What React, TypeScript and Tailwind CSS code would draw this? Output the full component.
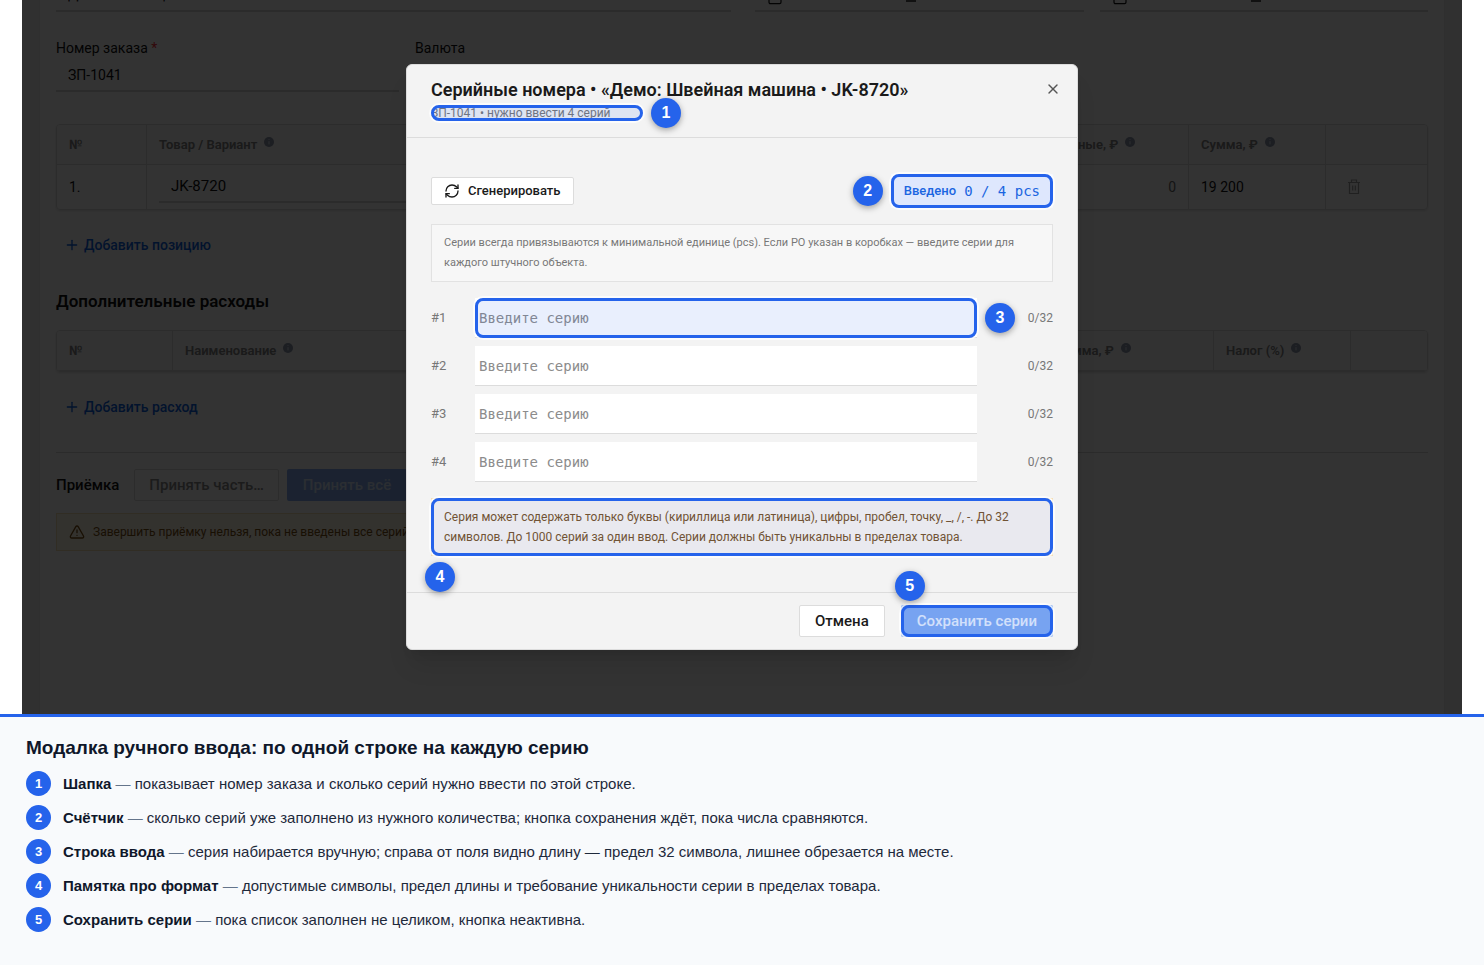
import type { ReactNode } from "react";
import { Calendar, Plus, RefreshCw, TriangleAlert, X } from "lucide-react";

const SLOTS = [1, 2, 3, 4];

const LEGEND = [
  { title: "Шапка", text: "показывает номер заказа и сколько серий нужно ввести по этой строке." },
  { title: "Счётчик", text: "сколько серий уже заполнено из нужного количества; кнопка сохранения ждёт, пока числа сравняются." },
  { title: "Строка ввода", text: "серия набирается вручную; справа от поля видно длину — предел 32 символа, лишнее обрезается на месте." },
  { title: "Памятка про формат", text: "допустимые символы, предел длины и требование уникальности серии в пределах товара." },
  { title: "Сохранить серии", text: "пока список заполнен не целиком, кнопка неактивна." },
];

function Marker({ n, place }: { n: number; place: string }) {
  return (
    <>
      <span className="pointer-events-none absolute inset-0 rounded-lg border-3 border-[#2563eb] bg-[#2563eb]/10 shadow-[0_0_0_2px_rgba(255,255,255,0.7)]" />
      <span
        className={`absolute z-10 flex size-[30px] items-center justify-center rounded-full bg-[#2563eb] font-['Liberation_Sans',sans-serif] text-base leading-none font-bold text-white shadow-[0_2px_6px_rgba(0,0,0,0.35)] ${place}`}
      >
        {n}
      </span>
    </>
  );
}

function InfoDot() {
  return (
    <svg viewBox="0 0 10 10" className="mb-0.5 ml-[7px] inline-block size-[10px] align-baseline" aria-hidden="true">
      <circle cx="5" cy="5" r="5" fill="#8a94a8" />
      <path d="M5 2.2v.9M5 4.2v3.2" stroke="#e2e8f0" strokeWidth="1" />
    </svg>
  );
}

function TrashIcon() {
  return (
    <svg viewBox="0 0 14 16" className="h-4 w-3.5" fill="none" stroke="#a0a0a0" strokeWidth="1.2" aria-hidden="true">
      <path d="M1 3.5h12M4.5 3.5V1h5v2.500M2.500 3.500v11h9v-11M5.700 6.500v5M8.300 6.500v5" />
    </svg>
  );
}

function Th({ children, info = true }: { children?: ReactNode; info?: boolean }) {
  return (
    <th className="h-10 border-r border-b border-[#dcdcdc] bg-[#f8f8f8] px-3 text-left text-[13px] leading-5 font-semibold whitespace-nowrap text-[#808080] last:border-r-0">
      {children}
      {info && <InfoDot />}
    </th>
  );
}

function DateField({ label }: { label: string }) {
  return (
    <label className="flex h-7 items-center gap-3 border-b-2 border-[#d6d6d6] px-3">
      <Calendar className="size-4 shrink-0" strokeWidth={1.8} />
      <input aria-label={label} defaultValue="12.05.2025" className="w-[99px] bg-transparent pb-2 text-sm outline-none" />
      <span className="size-2.5 border-b-2 border-[#555]" />
    </label>
  );
}

function OrderPage() {
  return (
    <div className="overflow-hidden bg-[#f1f1f1] px-[17px] text-[#111]">
      <div className="-mt-4 border-x border-[#ececec] bg-white px-4 pb-[163px]">
        <div className="grid grid-cols-[675fr_673fr] gap-x-6">
          <input
            aria-label="Поставщик"
            defaultValue="Демо поставщик"
            className="h-7 border-b-2 border-[#d6d6d6] px-3 pb-1.5 text-sm outline-none"
          />
          <div className="grid grid-cols-2 gap-x-4">
            <DateField label="Дата заказа" />
            <DateField label="Дата поставки" />
          </div>
        </div>

        <div className="mt-[26px] grid grid-cols-[343fr_316fr_681fr] gap-x-4">
          <div>
            <label htmlFor="order-number" className="block text-sm leading-5">
              Номер заказа <span className="text-red-500">*</span>
            </label>
            <input
              id="order-number"
              defaultValue="ЗП-1041"
              className="mt-0.5 h-8 w-full border-b-2 border-[#d6d6d6] px-3 text-sm outline-none"
            />
          </div>
          <div>
            <label htmlFor="currency" className="block text-sm leading-5">
              Валюта
            </label>
            <input id="currency" defaultValue="₽" className="mt-0.5 h-8 w-full border-b-2 border-[#d6d6d6] px-3 text-sm outline-none" />
          </div>
        </div>

        <div className="mt-8 overflow-hidden rounded border border-[#dcdcdc] shadow-sm">
          <table className="w-full table-fixed border-separate border-spacing-0 text-sm">
            <colgroup>
              <col className="w-[90px]" />
              <col />
              <col className="w-[169px]" />
              <col className="w-[137px]" />
              <col className="w-[101px]" />
            </colgroup>
            <thead>
              <tr>
                <Th info={false}>№</Th>
                <Th>Товар / Вариант</Th>
                <Th>Накладные, ₽</Th>
                <Th>Сумма, ₽</Th>
                <Th info={false} />
              </tr>
            </thead>
            <tbody>
              <tr>
                <td className="h-[44px] border-r border-[#dcdcdc] px-3">1.</td>
                <td className="border-r border-[#dcdcdc] px-3">
                  <input
                    aria-label="Товар"
                    defaultValue="JK-8720"
                    className="h-8 w-full border-b-2 border-[#d6d6d6] px-3 text-[15px] outline-none"
                  />
                </td>
                <td className="border-r border-[#dcdcdc] px-3 text-right text-[#666]">0</td>
                <td className="border-r border-[#dcdcdc] px-3">19 200</td>
                <td className="px-[21px]">
                  <button type="button" aria-label="Удалить позицию" className="flex">
                    <TrashIcon />
                  </button>
                </td>
              </tr>
            </tbody>
          </table>
        </div>

        <button type="button" className="mt-[25px] flex h-5 items-center gap-1 px-2 text-sm font-medium text-[#0d5fe0]">
          <Plus className="size-4" strokeWidth={2} />
          Добавить позицию
        </button>

        <h2 className="mt-[34px] mb-[17px] text-[17px] leading-6 font-semibold">Дополнительные расходы</h2>

        <div className="overflow-hidden rounded border border-[#dcdcdc] shadow-sm">
          <table className="w-full table-fixed border-separate border-spacing-0 text-sm">
            <colgroup>
              <col className="w-[116px]" />
              <col />
              <col className="w-[169px]" />
              <col className="w-[137px]" />
              <col className="w-[76px]" />
            </colgroup>
            <thead>
              <tr>
                <Th info={false}>№</Th>
                <Th>Наименование</Th>
                <Th>Сумма, ₽</Th>
                <Th>Налог (%)</Th>
                <Th info={false} />
              </tr>
            </thead>
          </table>
        </div>

        <button type="button" className="mt-[25px] flex h-5 items-center gap-1 px-2 text-sm font-medium text-[#0d5fe0]">
          <Plus className="size-4" strokeWidth={2} />
          Добавить расход
        </button>

        <div className="mt-[35px] flex items-center border-t border-[#d6d6d6] pt-4 text-[15px] font-medium">
          <span className="mr-[15px]">Приёмка</span>
          <button type="button" disabled className="mr-2 h-8 rounded-xs border border-[#dcdcdc] px-3.5 text-[#888]">
            Принять часть…
          </button>
          <button type="button" disabled className="h-8 rounded-xs bg-[#86acee] px-4 text-[#d5e3fa]">
            Принять всё
          </button>
        </div>

        <div className="mt-3 flex h-[38px] w-fit items-center gap-2 border border-[#f5dfb5] bg-[#fff7e6] px-3 text-xs text-[#7a4f12]">
          <TriangleAlert className="size-4" strokeWidth={2} />
          Завершить приёмку нельзя, пока не введены все серийные номера.
        </div>
      </div>
    </div>
  );
}

function SerialsDialog() {
  return (
    <div
      role="dialog"
      aria-modal="true"
      aria-labelledby="dialog-title"
      className="w-full max-w-2xl rounded-md border border-[#dcdcdc] bg-[#f3f3f3] text-[#1a1a1a] shadow-xl"
    >
      <header className="flex items-start justify-between border-b border-[#dcdcdc] px-6 py-4">
        <div>
          <h1 id="dialog-title" className="text-lg leading-[18px] font-semibold">
            Серийные номера • «Демо: Швейная машина • JK-8720»
          </h1>
          <p className="relative mt-1.5 w-[212px] text-xs leading-4 text-[#777]">
            ЗП-1041 • нужно ввести 4 серий
            <Marker n={1} place="left-full ml-2 -top-[7px]" />
          </p>
        </div>
        <button type="button" aria-label="Закрыть" className="-mr-2 text-[#555]">
          <X className="size-4" strokeWidth={2} />
        </button>
      </header>

      <div className="flex flex-col gap-4 px-6 py-9">
        <div className="flex items-center justify-between">
          <button
            type="button"
            className="flex h-7 items-center gap-2 rounded-xs border border-[#dcdcdc] bg-white px-3 text-[13px] font-medium"
          >
            <RefreshCw className="size-4" strokeWidth={2} />
            Сгенерировать
          </button>
          <div className="relative flex h-[34px] items-center gap-2 bg-[#f3f7ff] px-[13px] text-[#1a66e0]">
            <span className="text-[13px] font-medium">Введено</span>
            <span className="font-['DejaVu_Sans_Mono',monospace] text-sm">0 / 4 pcs</span>
            <Marker n={2} place="right-full mr-2 top-0.5" />
          </div>
        </div>

        <p className="border border-[#e2e2e2] bg-[#f7f7f7] px-3 py-2 text-[11px] leading-5 text-[#777]">
          Серии всегда привязываются к минимальной единице (pcs). Если PO указан в коробках — введите серии для каждого
          штучного объекта.
        </p>

        <div className="flex flex-col gap-2">
          {SLOTS.map((slot) => (
            <div key={slot} className="grid grid-cols-[32px_1fr_64px] items-center gap-3 text-[#777]">
              <label htmlFor={`serial-${slot}`} className="text-[13px]">
                #{slot}
              </label>
              <div className="relative h-10">
                <input
                  id={`serial-${slot}`}
                  placeholder="Введите серию"
                  maxLength={32}
                  className="h-full w-full border-b border-[#dcdcdc] bg-white px-1 pt-px font-['DejaVu_Sans_Mono',monospace] text-sm outline-none placeholder:text-[#8c8c8c]"
                />
                {slot === 1 && <Marker n={3} place="left-full ml-2 top-[5px]" />}
              </div>
              <span className="text-right text-xs">0/32</span>
            </div>
          ))}
        </div>

        <div className="relative">
          <p className="border border-[#f5dfb5] bg-[#fff9f0] px-3 py-2 text-xs leading-5 text-[#7a5220]">
            Серия может содержать только буквы (кириллица или латиница), цифры, пробел, точку, _, /, -. До 32 символов. До
            1000 серий за один ввод. Серии должны быть уникальны в пределах товара.
          </p>
          <Marker n={4} place="-left-1.5 top-full mt-1.5" />
        </div>
      </div>

      <footer className="flex justify-end gap-4 border-t border-[#dcdcdc] px-6 py-3 text-[15px] font-medium">
        <button type="button" className="h-8 rounded-xs border border-[#dcdcdc] bg-white px-[15px]">
          Отмена
        </button>
        <div className="relative">
          <button type="button" disabled className="h-8 rounded-xs bg-[#80abf2] px-4 text-[#e6effd]">
            Сохранить серии
          </button>
          <Marker n={5} place="-left-1.5 bottom-full mb-1" />
        </div>
      </footer>
    </div>
  );
}

export default function App() {
  return (
    <div className="flex min-h-screen flex-col bg-white font-[Roboto,sans-serif]">
      <main className="relative mx-[22px]">
        <OrderPage />
        <div className="absolute inset-0 flex items-center justify-center bg-black/80">
          <SerialsDialog />
        </div>
      </main>

      <section className="flex-1 border-t-3 border-[#2563eb] bg-[#f8fafc] px-[26px] pt-5 pb-8 font-['Liberation_Sans',Arial,sans-serif] text-[#1e293b]">
        <h2 className="text-[19px] leading-[22px] font-bold text-[#0f172a]">
          Модалка ручного ввода: по одной строке на каждую серию
        </h2>
        <ol className="mt-3 flex flex-col gap-[9px]">
          {LEGEND.map((item, i) => (
            <li key={item.title} className="flex items-center gap-3 text-[15px] leading-5">
              <span className="flex size-[25px] shrink-0 items-center justify-center rounded-full bg-[#2563eb] text-[13px] font-bold text-white">
                {i + 1}
              </span>
              <span>
                <b className="font-bold text-[#0f172a]">{item.title}</b> <span className="text-[#64748b]">—</span> {item.text}
              </span>
            </li>
          ))}
        </ol>
      </section>
    </div>
  );
}
